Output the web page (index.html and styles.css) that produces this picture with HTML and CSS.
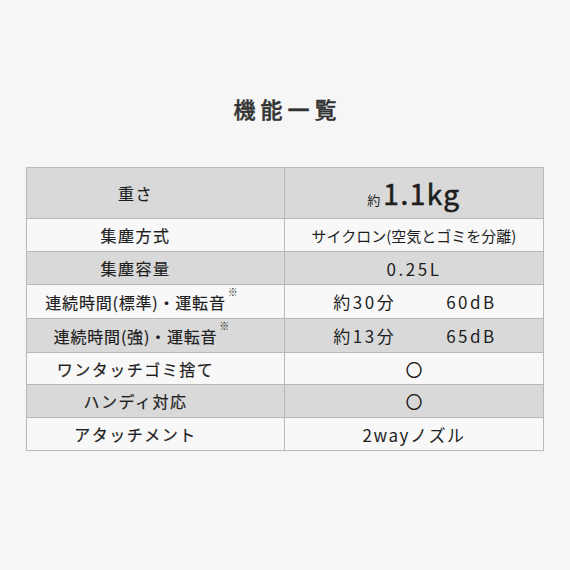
FILE: index.html
```html
<!DOCTYPE html>
<html lang="ja">
<head>
<meta charset="utf-8">
<link rel="stylesheet" href="styles.css">
</head>
<body>
<main class="page">
  <h1 class="title">機能一覧</h1>
  <table class="spec">
    <tr class="row row-head gray">
      <td class="label"><span class="lbl">重さ</span></td>
      <td class="value"><span class="approx">約</span><span class="weight">1.1kg</span></td>
    </tr>
    <tr class="row light">
      <td class="label"><span class="lbl">集塵方式</span></td>
      <td class="value"><span class="val-sm">サイクロン(空気とゴミを分離)</span></td>
    </tr>
    <tr class="row gray">
      <td class="label"><span class="lbl">集塵容量</span></td>
      <td class="value"><span class="num">0.25L</span></td>
    </tr>
    <tr class="row row-tall light">
      <td class="label"><span class="lbl note">連続時間(標準)・運転音<sup class="mark">※</sup></span></td>
      <td class="value"><span class="pair"><span class="num">約30分</span><span class="num">60dB</span></span></td>
    </tr>
    <tr class="row row-tall gray">
      <td class="label"><span class="lbl note">連続時間(強)・運転音<sup class="mark">※</sup></span></td>
      <td class="value"><span class="pair"><span class="num">約13分</span><span class="num">65dB</span></span></td>
    </tr>
    <tr class="row row-short light">
      <td class="label"><span class="lbl">ワンタッチゴミ捨て</span></td>
      <td class="value"><span class="circle">○</span></td>
    </tr>
    <tr class="row gray">
      <td class="label"><span class="lbl">ハンディ対応</span></td>
      <td class="value"><span class="circle">○</span></td>
    </tr>
    <tr class="row light">
      <td class="label"><span class="lbl">アタッチメント</span></td>
      <td class="value"><span class="num tight">2wayノズル</span></td>
    </tr>
  </table>
</main>
</body>
</html>
```

FILE: styles.css
```css
html, body {
  margin: 0;
  padding: 0;
  background: #f6f6f6;
}

body {
  font-family: "Noto Sans CJK JP", "Noto Sans", sans-serif;
  color: #1e1e1e;
}

.page {
  width: 570px;
  height: 570px;
  padding-top: 93px;
  box-sizing: border-box;
}

.title {
  margin: 0 0 44px 0;
  height: 30px;
  line-height: 30px;
  font-size: 22px;
  font-weight: 500;
  -webkit-text-stroke: 0.4px #333;
  letter-spacing: 5px;
  text-align: center;
  color: #333;
  padding-left: 5px;
}

.spec {
  width: 518px;
  margin: 0 auto;
  border-collapse: collapse;
  table-layout: fixed;
  border: 1px solid #a5a5a5;
}

.row td {
  height: 32px;
  padding: 0;
  border: 1px solid #b8b8b8;
  text-align: center;
  vertical-align: middle;
  line-height: 1;
}

.row-head td { height: 50px; }
.row-tall td { height: 33px; }
.row-short td { height: 31px; }

.gray td { background: #d9d9d9; }
.light td { background: #f8f8f8; }

.label {
  width: 258px;
  padding-right: 40px !important;
  box-sizing: border-box;
}

.lbl {
  font-size: 16px;
  letter-spacing: 1.5px;
  -webkit-text-stroke: 0.2px #1e1e1e;
}

.note {
  position: relative;
  letter-spacing: 0.8px;
}

.mark {
  position: absolute;
  right: -12px;
  top: -3px;
  font-size: 10px;
  letter-spacing: 0;
  line-height: 1;
  -webkit-text-stroke: 0;
}

.approx {
  font-size: 13px;
  margin-right: 3px;
}

.weight {
  font-size: 28px;
  font-weight: 400;
  -webkit-text-stroke: 0.6px #1e1e1e;
  letter-spacing: 1.5px;
}

.val-sm {
  font-size: 15px;
}

.num {
  font-size: 17px;
  letter-spacing: 2.5px;
}

.tight {
  letter-spacing: 1.5px;
}

.pair {
  display: inline-flex;
  gap: 50px;
  padding-left: 2px;
}

.circle {
  font-size: 16px;
  -webkit-text-stroke: 0.7px #1e1e1e;
}
```
